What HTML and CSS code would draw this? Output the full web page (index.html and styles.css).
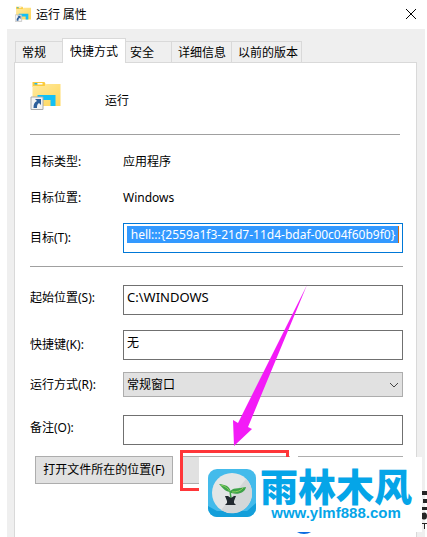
FILE: index.html
```html
<!DOCTYPE html>
<html lang="zh-CN">
<head>
<meta charset="utf-8">
<title>运行 属性</title>
<link rel="stylesheet" href="styles.css">
</head>
<body>
<svg class="defs" aria-hidden="true">
  <defs>
    <linearGradient id="fold" x1="0" y1="0" x2="1" y2="1"><stop offset="0" stop-color="#ffeaa0"/><stop offset="1" stop-color="#ffd659"/></linearGradient>
    <symbol id="folder" viewBox="0 0 30 29">
      <path d="M2 1h12l1 2v3H2z" fill="#fbcb3c"/>
      <path d="M4 2h3v1.500H4z" fill="#19b9ee"/><path d="M7 2h5v1.500H7z" fill="#fff"/>
      <path d="M2 5h12l2-2h14v22H2z" fill="url(#fold)"/>
      <path d="M7 14h18v11h-5v-6h-8v6H7z" fill="#12c0f5"/>
      <path d="M.5 16h12v12.500H.5z" fill="#f4f4f4" stroke="#aaa"/>
      <path d="M4.500 18h6v6l-2-2c-2 1-2 3-2 5H3c0-4 1-6 3.500-7z" fill="#2d5f9b"/>
    </symbol>
  </defs>
</svg>
<header class="titlebar">
  <svg class="title-icon"><use href="#folder"/></svg>
  <h1>运行 属性</h1>
  <button class="close" type="button" aria-label="关闭"><svg viewBox="0 0 10 10"><path d="M0 0l10 10M10 0L0 10"/></svg></button>
</header>
<main class="dialog">
  <nav class="tabs">
    <button type="button" class="tab">常规</button>
    <button type="button" class="tab active">快捷方式</button>
    <button type="button" class="tab">安全</button>
    <button type="button" class="tab wide">详细信息</button>
    <button type="button" class="tab wide">以前的版本</button>
  </nav>
  <form class="panel">
    <div class="heading"><svg class="big-icon"><use href="#folder"/></svg><span>运行</span></div>
    <hr class="short">
    <dl class="facts">
      <dt>目标类型:</dt><dd>应用程序</dd>
      <dt>目标位置:</dt><dd>Windows</dd>
    </dl>
    <div class="row target"><label for="target">目标(T):</label><input id="target" class="selected" value="hell:::{2559a1f3-21d7-11d4-bdaf-00c04f60b9f0}"></div>
    <hr>
    <div class="row start"><label for="start">起始位置(S):</label><input id="start" value="C:\WINDOWS"></div>
    <div class="row"><label for="key">快捷键(K):</label><input id="key" value="无"></div>
    <div class="row mode"><label for="mode">运行方式(R):</label>
      <div class="select"><select id="mode"><option>常规窗口</option></select><svg viewBox="0 0 10 6"><path d="M1 1l4 4 4-4"/></svg></div></div>
    <div class="row note"><label for="note">备注(O):</label><input id="note"></div>
    <div class="actions">
      <button type="button">打开文件所在的位置(F)</button>
      <button type="button" aria-label="更改图标"></button>
      <button type="button" aria-label="高级"></button>
      <div class="frame"></div>
      <svg class="arrow" viewBox="0 0 76 162"><path d="M75 0L16 142l4 2L2 161 1 135l5 3z"/></svg>
      <span class="arc"></span>
      <div class="brand">
        <svg class="logo" viewBox="0 0 48 48">
          <rect width="48" height="48" rx="9" fill="#44bbeb"/>
          <path d="M48 34v5a9 9 0 0 1-9 9H9a9 9 0 0 1-9-9v-2l9 5h30z" fill="#149fda"/>
          <circle cx="24" cy="24" r="20" fill="#e3e6e6"/>
          <path d="M38 10a20 20 0 0 1-25 31z" fill="#d3d7d8"/>
          <path d="M11 15c6 1 10 1 12 8-6 0-8-4-12-8z" fill="#3da348"/>
          <path d="M22 23c2-5 8-3 16-5-1 6-8 8-15 6z" fill="#3da348"/>
          <path d="M13 16q7 2 9 7M24 23q8 0 11-4" fill="none" stroke="#8bd05e"/>
          <path d="M22 22l1 7" fill="none" stroke="#3da348" stroke-width="1.500"/>
          <path d="M17 27h3l3 2 3-2h2l-2 5v2l2 2H17l2-2v-2z" fill="#222a30"/>
        </svg>
        <div class="words"><strong>雨林木风</strong><span>www.ylmf888.com</span></div>
      </div>
      <svg class="edge" viewBox="0 0 5 40"><path d="M0 0h5v4H0zM1 8h4v4H1zM0 16h5v3H0zM0 22q5-2 5 3t-5 3zM0 32h5v1H3v5H2v-5H0z"/></svg>
    </div>
  </form>
</main>
</body>
</html>
```
FILE: styles.css
```css
* { box-sizing: border-box; }
html { background: #fff; }
body {
  margin: 0;
  min-height: 100vh;
  display: flex;
  flex-direction: column;
  overflow: hidden;
  background: #fff;
  color: #000;
  font: 12px/16px "Noto Sans CJK SC", sans-serif;
}
button, input, select { font: inherit; color: inherit; margin: 0; }
.defs { position: absolute; width: 0; height: 0; }
.titlebar { display: flex; align-items: center; height: 29px; padding: 0 10px 2px 15px; }
.title-icon { width: 16px; height: 16px; margin-right: 5px; }
h1 { margin: 0; flex: 1; font-size: 12px; font-weight: 400; }
.close { width: 12px; height: 12px; padding: 1px; border: 0; background: none; display: flex; }
.close svg { width: 10px; height: 10px; fill: none; stroke: #000; overflow: visible; }
.dialog {
  flex: 1;
  display: flex;
  flex-direction: column;
  margin: 0 2px 0 7px;
  padding: 9px 8px 0 7px;
  background: #efefef;
}
.tabs { display: flex; align-items: flex-end; padding-left: 1px; }
.tab {
  height: 21px;
  padding: 0 17px 0 5px;
  border: 1px solid #d9d9d9;
  border-width: 1px 0 0 1px;
  background: #efefef;
  white-space: nowrap;
}
.tab:first-child { padding: 0 16px 0 6px; }
.tab.wide { padding: 0 5px 0 6px; }
.tab.wide:last-child { padding-right: 3px; border-right-width: 1px; }
.tab.active { height: 25px; margin-bottom: -1px; padding: 0 7px; border-right-width: 1px; background: #fff; position: relative; }
.tab.active + .tab { border-left: 0; padding-left: 4px; }
.panel { flex: 1; padding: 0 13px 0 15px; border: 1px solid #d9d9d9; border-bottom: 0; background: #fff; }
.heading { display: flex; align-items: center; height: 71px; padding-top: 2px; }
.big-icon { width: 31px; height: 29px; margin: 0 44px 8px 0; }
hr { margin: 0; border: 0; border-top: 1px solid #a0a0a0; }
.short { margin-right: 3px; }
.facts { display: grid; grid-template-columns: 93px 1fr; row-gap: 20px; margin: 0; padding: 19px 0 17px; }
.facts dd { margin: 0; }
.facts, .row { font-family: "Noto Sans", "Noto Sans CJK SC", sans-serif; }
.row { display: grid; grid-template-columns: 93px 1fr; align-items: center; margin-bottom: 15px; }
.row.target { margin-bottom: 13px; }
.row.start { margin-top: 18px; }
.start label, .note label { padding-bottom: 4px; }
.row input { width: 100%; height: 30px; padding: 2px 3px 9px; border: 1px solid #707070; border-radius: 0; background: #fff; outline: 0; }
.row.start input { font-size: 13px; }
.row .selected {
  border-color: #0078d7;
  color: #fff;
  text-align: center;
  background: linear-gradient(to left, #d06a12 1px, #3399ff 1px) content-box;
}
.select { position: relative; display: flex; }
.select select { appearance: none; width: 100%; height: 25px; padding: 0 3px; border: 1px solid #adadad; border-radius: 0; background: #e1e1e1; }
.select svg { position: absolute; right: 4px; top: 10px; width: 10px; height: 6px; fill: none; stroke: #444; pointer-events: none; }
.row.mode { margin: -3px 0 18px; }
.row.note { margin-bottom: 11px; }
.actions { position: relative; display: grid; grid-template-columns: 138px 1fr 105px; gap: 8px; padding-left: 5px; }
.actions button { height: 28px; padding: 0; border: 1px solid #adadad; background: #e1e1e1; font-family: "Noto Sans", "Noto Sans CJK SC", sans-serif; white-space: nowrap; }
.frame { position: absolute; left: 150px; top: -6px; width: 109px; height: 41px; border: 3px solid #ff3639; }
.arrow { position: absolute; left: 202px; top: -171px; width: 76px; height: 162px; fill: #f31bf7; }
.brand { position: absolute; left: 169px; top: 1px; width: 223px; height: 75px; padding: 12px 0 0 9px; display: flex; gap: 4px; background: #fff; color: #05a5e8; }
.logo { width: 48px; height: 48px; flex: none; }
.words { display: flex; flex-direction: column; align-items: center; white-space: nowrap; }
.words strong { font-size: 38px; line-height: 32px; font-weight: 900; }
.words span { font: bold 15px/24px "Liberation Sans", sans-serif; }
.arc { position: absolute; left: 264px; top: 64px; width: 20px; height: 14px; border-radius: 50%; background: #0a6be0; }
.edge { position: absolute; left: 392px; top: 35px; width: 5px; height: 40px; fill: #252525; }
```
